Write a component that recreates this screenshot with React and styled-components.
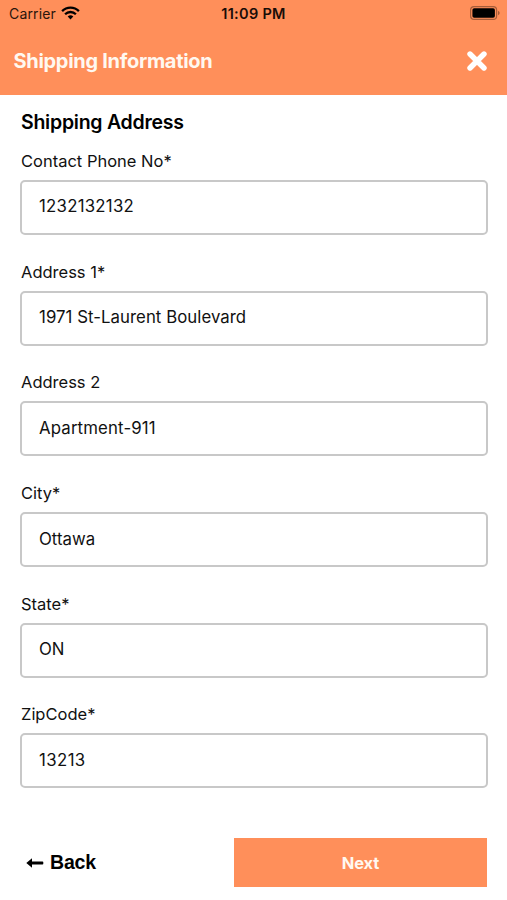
import React, { useState } from 'react';
import styled, { createGlobalStyle } from 'styled-components';

const GlobalStyle = createGlobalStyle`
  * {
    box-sizing: border-box;
  }

  body {
    margin: 0;
    background-color: #fff;
    font-family: Inter, 'Liberation Sans', sans-serif;
    color: #111;
  }
`;

// Screen and top bars
const Screen = styled.div`
  height: 900px;
  display: flex;
  flex-direction: column;
`;

const Header = styled.header`
  height: 95.4px;
  background-color: #ff8f5a;
`;

const StatusBar = styled.div`
  height: 27px;
  padding: 0 7px 0 9px;
  display: grid;
  grid-template-columns: 1fr auto 1fr;
  align-items: center;
  font-size: 14px;
  line-height: 27px;
  color: #2a150c;
`;

const Carrier = styled.div`
  display: flex;
  align-items: center;
  gap: 5.5px;
  letter-spacing: 0.15px;

  svg {
    margin-bottom: 1px;
  }
`;

const Time = styled.div`
  margin-right: 2px;
  font-size: 14.5px;
  font-weight: 600;
  letter-spacing: 0.3px;
  color: #1a0d07;
`;

const Battery = styled.div`
  display: flex;
  justify-content: flex-end;
  padding-bottom: 1px;
`;

const TitleBar = styled.div`
  height: 67px;
  padding: 0 20px 0 13.5px;
  display: flex;
  align-items: center;
  justify-content: space-between;
`;

const Title = styled.h1`
  margin: 0;
  font-size: 20px;
  font-weight: 650;
  letter-spacing: -0.3px;
  color: #fff8f0;
`;

const CloseButton = styled.button`
  padding: 0;
  border: 0;
  background: none;
  display: flex;
`;

// Form
const Form = styled.main`
  padding: 13.6px 20px 0;
`;

const Heading = styled.h2`
  margin: 0 0 16px 1px;
  font-size: 19.5px;
  line-height: 26px;
  font-weight: 600;
  letter-spacing: -0.25px;
  color: #000;
`;

const Field = styled.label`
  display: block;
  height: 110.7px;
`;

const Label = styled.span`
  display: block;
  margin: 0 0 9px 1px;
  font-size: 16.5px;
  line-height: 20px;
`;

const Input = styled.input`
  display: block;
  width: 468px;
  height: 55px;
  padding: 0 17px 2px;
  border: 2px solid #c8c8c8;
  border-radius: 5px;
  background-color: #fff;
  font: inherit;
  font-size: 16.8px;
  letter-spacing: ${(props) => props.$spacing || 0}px;
  color: #111;
  outline: none;
`;

// Bottom actions
const Footer = styled.footer`
  margin-top: 23px;
  padding: 0 20px 0 26px;
  display: flex;
  align-items: center;
  justify-content: space-between;
`;

const BackButton = styled.button`
  padding: 0;
  border: 0;
  background: none;
  display: flex;
  align-items: center;
  gap: 6px;
  font-family: 'Liberation Sans', sans-serif;
  font-size: 19.5px;
  font-weight: 700;
  letter-spacing: -0.2px;
  color: #000;
`;

const NextButton = styled.button`
  width: 253px;
  height: 49px;
  padding: 1px 0 0;
  border: 0;
  background-color: #ff8f5a;
  font-family: inherit;
  font-size: 16.5px;
  font-weight: 650;
  letter-spacing: -0.1px;
  color: #fff8f0;
`;

const WifiIcon = () => (
  <svg width="19" height="14" viewBox="0 0 19 14" fill="none" stroke="#000" strokeWidth="2.3">
    <path d="M1.1 5.1a11.9 11.9 0 0 1 16.8 0" />
    <path d="M4.1 8.2a7.7 7.7 0 0 1 10.8 0" />
    <path d="M9.5 13.4 6.7 10.6a4 4 0 0 1 5.6 0z" fill="#000" stroke="none" />
  </svg>
);

const BatteryIcon = () => (
  <svg width="30" height="14" viewBox="0 0 30 14">
    <rect x="0.6" y="0.6" width="26" height="12.8" rx="3.5" fill="none" stroke="#a65c39" strokeWidth="1.2" />
    <rect x="2.4" y="2.3" width="22.5" height="9.4" rx="1.8" fill="#000" />
    <path d="M28 4.8v4.4q1.7-.8 1.7-2.2T28 4.8z" fill="#a65c39" />
  </svg>
);

const CloseIcon = () => (
  <svg width="20" height="20" viewBox="0 0 20 20">
    <path d="M3 3l14 14M17 3L3 17" stroke="#fff" strokeWidth="5.4" strokeLinecap="round" />
  </svg>
);

const ArrowIcon = () => (
  <svg width="18" height="10" viewBox="0 0 18 10">
    <path d="M6 .3v3.100h10.500q.8 0 .8.800v1.600q0 .8-.8.800H6v3.100L.3 5z" fill="#000" />
  </svg>
);

const fields = [
  { name: 'phone', label: 'Contact Phone No*', value: '1232132132', spacing: 0.25 },
  { name: 'address1', label: 'Address 1*', value: '1971 St-Laurent Boulevard', spacing: 0.05 },
  { name: 'address2', label: 'Address 2', value: 'Apartment-911', spacing: 0.15 },
  { name: 'city', label: 'City*', value: 'Ottawa' },
  { name: 'state', label: 'State*', value: 'ON' },
  { name: 'zip', label: 'ZipCode*', value: '13213', spacing: 0.4 },
];

const App = () => {
  const [values, setValues] = useState(
    Object.fromEntries(fields.map((field) => [field.name, field.value]))
  );

  const handleChange = (e) => {
    setValues({ ...values, [e.target.name]: e.target.value });
  };

  return (
    <Screen>
      <GlobalStyle />
      <Header>
        <StatusBar>
          <Carrier>
            Carrier
            <WifiIcon />
          </Carrier>
          <Time>11:09 PM</Time>
          <Battery>
            <BatteryIcon />
          </Battery>
        </StatusBar>
        <TitleBar>
          <Title>Shipping Information</Title>
          <CloseButton>
            <CloseIcon />
          </CloseButton>
        </TitleBar>
      </Header>
      <Form>
        <Heading>Shipping Address</Heading>
        {fields.map((field) => (
          <Field key={field.name}>
            <Label>{field.label}</Label>
            <Input
              name={field.name}
              value={values[field.name]}
              $spacing={field.spacing}
              onChange={handleChange}
            />
          </Field>
        ))}
      </Form>
      <Footer>
        <BackButton>
          <ArrowIcon />
          Back
        </BackButton>
        <NextButton>Next</NextButton>
      </Footer>
    </Screen>
  );
};

export default App;
